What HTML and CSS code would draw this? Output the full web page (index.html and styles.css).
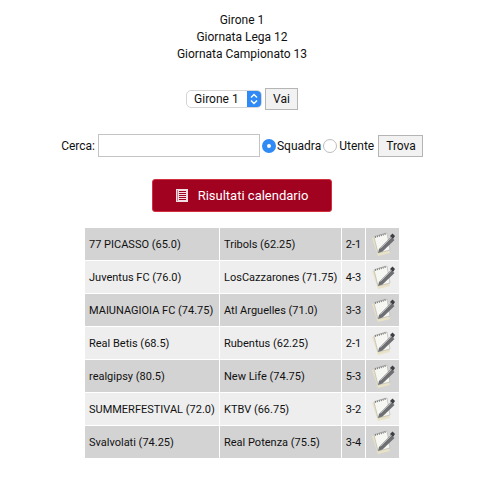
FILE: index.html
```html
<!DOCTYPE html>
<html lang="it">
<head>
    <meta charset="UTF-8">
    <title>Risultati calendario</title>
    <link rel="stylesheet" href="styles.css">
</head>
<body>
    <div class="intro">
        <div>Girone 1</div>
        <div>Giornata Lega 12</div>
        <div>Giornata Campionato 13</div>
    </div>

    <div class="pick-row">
        <div class="fake-select">
            <span class="fake-select-text">Girone 1</span>
            <span class="fake-select-arrows">
                <svg width="8" height="12" viewBox="0 0 8 12"><path d="M1 4.5 4 1.5 7 4.5M1 7.5 4 10.5 7 7.5" fill="none" stroke="#fff" stroke-width="1.4"/></svg>
            </span>
        </div>
        <button class="btn">Vai</button>
    </div>

    <div class="search-row">
        <label class="search-label" for="q">Cerca:</label>
        <input class="search-input" id="q" type="text">
        <span class="radio radio-on"></span><span class="radio-text">Squadra</span>
        <span class="radio"></span><span class="radio-text radio-text-last">Utente</span>
        <button class="btn btn-trova">Trova</button>
    </div>

    <div class="red-row">
        <a class="red-btn" href="#">
            <svg class="red-icon" width="12" height="13" viewBox="0 0 12 13">
                <rect width="12" height="13" fill="#f3dfe3"/>
                <path d="M3 2.5h7M3 4.5h7M3 6.5h7M3 8.5h7M3 10.5h7" stroke="#a0021f" stroke-width="1"/>
                <path d="M1.5 1v11" stroke="#c9808f" stroke-width="1"/>
            </svg>
            Risultati calendario
        </a>
    </div>

    <table class="results">
        <tr class="dark"><td class="team-a">77 PICASSO (65.0)</td><td class="team-b">Tribols (62.25)</td><td class="score">2-1</td><td class="edit"><svg class="note"><use href="#note"/></svg></td></tr>
        <tr class="light"><td class="team-a">Juventus FC (76.0)</td><td class="team-b">LosCazzarones (71.75)</td><td class="score">4-3</td><td class="edit"><svg class="note"><use href="#note"/></svg></td></tr>
        <tr class="dark"><td class="team-a">MAIUNAGIOIA FC (74.75)</td><td class="team-b">Atl Arguelles (71.0)</td><td class="score">3-3</td><td class="edit"><svg class="note"><use href="#note"/></svg></td></tr>
        <tr class="light"><td class="team-a">Real Betis (68.5)</td><td class="team-b">Rubentus (62.25)</td><td class="score">2-1</td><td class="edit"><svg class="note"><use href="#note"/></svg></td></tr>
        <tr class="dark"><td class="team-a">realgipsy (80.5)</td><td class="team-b">New Life (74.75)</td><td class="score">5-3</td><td class="edit"><svg class="note"><use href="#note"/></svg></td></tr>
        <tr class="light"><td class="team-a">SUMMERFESTIVAL (72.0)</td><td class="team-b">KTBV (66.75)</td><td class="score">3-2</td><td class="edit"><svg class="note"><use href="#note"/></svg></td></tr>
        <tr class="dark"><td class="team-a">Svalvolati (74.25)</td><td class="team-b">Real Potenza (75.5)</td><td class="score">3-4</td><td class="edit"><svg class="note"><use href="#note"/></svg></td></tr>
    </table>

    <svg class="defs" width="0" height="0">
        <symbol id="note" viewBox="0 0 24 26">
            <path d="M1 7 13 3 19 22 7 25Z" fill="#e9e2c6"/>
            <path d="M3 6 16 2 19 19 7 22Z" fill="#f6f6f2" stroke="#b9b9b4" stroke-width=".7"/>
            <path d="M4 6 15.5 2.5" stroke="#7d7d7d" stroke-width="2" stroke-dasharray="1 1"/>
            <path d="M8 18 20 6 23.5 9 11.5 20.5 7 22Z" fill="#6d6f72"/>
            <path d="M19 5 21.5 2.5 24 5 22 8Z" fill="#3e3f42"/>
            <path d="M9.5 17.5 20.5 6.5" stroke="#c8c8c8" stroke-width=".8"/>
        </symbol>
    </svg>
</body>
</html>
```

FILE: styles.css
```css
body {
    margin: 0;
    padding-right: 3px;
    font-family: Roboto, sans-serif;
    font-size: 12px;
    color: #111;
    background-color: #fff;
}
.intro {
    padding-top: 12px;
    text-align: center;
    line-height: 17px;
}
.pick-row {
    display: flex;
    justify-content: center;
    align-items: center;
    gap: 3px;
    margin-top: 25px;
}
.fake-select {
    display: flex;
    width: 76px;
    height: 18px;
    box-sizing: border-box;
    border: 1px solid #d6d6d6;
    border-radius: 5px;
    overflow: hidden;
    background-color: #fff;
}
.fake-select-text {
    flex: 1;
    padding-left: 7px;
    line-height: 16px;
}
.fake-select-arrows {
    display: flex;
    width: 14px;
    align-items: center;
    justify-content: center;
    background-color: #2f8af5;
}
.btn {
    height: 22px;
    padding: 0 7px;
    border: 1px solid #b5b5b5;
    background-color: #f2f2f2;
    font-family: Roboto, sans-serif;
    font-size: 12px;
    color: #111;
}
.search-row {
    display: flex;
    justify-content: center;
    align-items: center;
    margin-top: 24px;
}
.search-label {
    margin-right: 3px;
}
.search-input {
    width: 162px;
    height: 23px;
    box-sizing: border-box;
    margin: 0;
    border: 1px solid #c4c4c4;
}
.radio {
    width: 14px;
    height: 14px;
    box-sizing: border-box;
    margin-left: 2px;
    border: 1px solid #bdbdbd;
    border-radius: 50%;
    background-color: #fff;
}
.radio-on {
    border: 5px solid #2f8af5;
}
.radio-text {
    margin-left: 1px;
}
.radio-text-last {
    margin-left: 2px;
}
.btn-trova {
    margin-left: 4px;
    padding: 0 6px 0 7px;
}
.red-row {
    display: flex;
    justify-content: center;
    margin-top: 22px;
}
.red-btn {
    display: flex;
    align-items: center;
    justify-content: center;
    gap: 10px;
    width: 180px;
    height: 33px;
    box-sizing: border-box;
    border: 1px solid #d2303f;
    border-radius: 3px;
    background-color: #a0021f;
    color: #fff;
    font-size: 13px;
    text-decoration: none;
}
.results {
    margin: 15px auto 0;
    width: 316px;
    border-collapse: separate;
    border-spacing: 1px;
    table-layout: fixed;
    font-size: 11px;
}
.results td {
    height: 32px;
    box-sizing: border-box;
    padding: 0 0 0 4px;
    color: #111;
    white-space: nowrap;
}
.dark td {
    background-color: #d3d3d3;
}
.light td {
    background-color: #eeeeee;
}
.team-a {
    width: 134px;
}
.team-b {
    width: 121px;
}
.results .score {
    width: 23px;
    padding: 0;
    text-align: center;
}
.results .edit {
    padding: 0 0 0 5px;
    line-height: 0;
}
.note {
    width: 24px;
    height: 26px;
}
.defs {
    position: absolute;
}
```
